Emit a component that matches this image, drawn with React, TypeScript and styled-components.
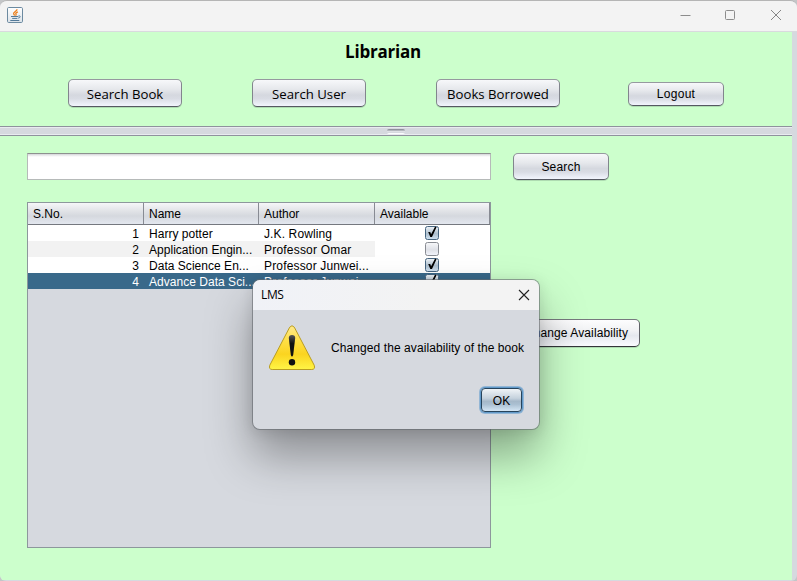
import React from "react";
import styled, { createGlobalStyle, css } from "styled-components";

const GlobalStyle = createGlobalStyle`
  * { box-sizing: border-box; }
  body { margin: 0; background: #c4c6c8; overflow: hidden; }
`;

const Window = styled.div`
  position: relative;
  width: 797px;
  height: 581px;
  display: flex;
  flex-direction: column;
  overflow: hidden;
  background: #d6d9df;
  border-top: 1px solid #b5b5b5;
  border-radius: 7px 7px 6px 6px;
  font-family: "Liberation Sans", Arial, sans-serif;
  font-size: 12px;
  color: #000;
`;

const TitleBar = styled.header`
  height: 31px;
  flex: none;
  display: flex;
  align-items: center;
  justify-content: space-between;
  padding: 0 15px 2px 7px;
  background: #f3f3f3;
  border-bottom: 1px solid #d9dade;
`;

const WindowControls = styled.div`
  display: flex;
  gap: 34px;
`;

const Content = styled.main`
  width: 792px;
  height: 548px;
  display: flex;
  flex-direction: column;
  background: #ccffcc;
`;

const TopPanel = styled.section`
  height: 94px;
  flex: none;
`;

const Heading = styled.h1`
  margin: 0;
  padding: 8px 0 0 345px;
  height: 47px;
  font: 700 17px/24px "Open Sans", "Noto Sans", sans-serif;
  letter-spacing: -0.2px;
  white-space: nowrap;
`;

const Nav = styled.nav`
  display: flex;
  height: 28px;
  align-items: flex-start;
  padding-left: 68px;
`;

const Button = styled.button<{ $w: number; $h?: number; $ml?: number; $mt?: number; $large?: boolean; $hover?: boolean; $track?: number }>`
  flex: none;
  width: ${(p) => p.$w}px;
  height: ${(p) => p.$h ?? 28}px;
  margin: ${(p) => p.$mt ?? 0}px 0 0 ${(p) => p.$ml ?? 0}px;
  padding: ${(p) => (p.$large ? "2px 0 0" : "0")};
  border: 1px solid;
  border-color: #96999f #82858d #555861 #82858d;
  border-radius: 5px;
  background: linear-gradient(#f7f8fa 0%, #e6e8ec 35%, #d5d8df 58%, #d9dce4 72%, #f2f5fd 100%);
  box-shadow: 0 1px 0 rgba(110, 140, 120, 0.3);
  color: #000;
  font: 12px/16px "Liberation Sans", Arial, sans-serif;
  letter-spacing: ${(p) => p.$track ?? 0}px;
  white-space: nowrap;
  ${(p) => p.$large && css`font: 13.2px/18px "Open Sans", "Noto Sans", sans-serif;`}
  ${(p) =>
    p.$hover &&
    css`
      border-color: #77797e #606268 #33353a;
      background: linear-gradient(#fdfdfe 0%, #f2f3f5 40%, #e5e8ee 60%, #fafbff 100%);
    `}
`;

const Divider = styled.div`
  height: 10px;
  flex: none;
  display: flex;
  justify-content: center;
  align-items: flex-start;
  padding-top: 1px;
  border-top: 1px solid #8f929d;
  border-bottom: 1px solid #8f929d;
  background: linear-gradient(#e9ebf0 0 1px, #d6d9df 1px 7px, #e9ebf0 7px);
`;

const Grip = styled.span`
  width: 18px;
  height: 5px;
  margin-top: 1px;
  border-radius: 2px;
  background: linear-gradient(#8f929b 0 1px, #b4b7be 1px 2px, #dfe1e6 2px 3px, #d6d9df 3px 4px, #fcfcfe 4px);
`;

const BottomPanel = styled.section`
  flex: 1;
  display: grid;
  grid-template-columns: 464px 127px;
  grid-template-rows: 27px 346px;
  column-gap: 22px;
  row-gap: 22px;
  padding: 17px 0 0 27px;
`;

const SearchField = styled.input`
  width: 464px;
  height: 27px;
  border: 1px solid #b6bab9;
  border-top-color: #8d918f;
  outline: none;
  background: linear-gradient(#d4d5d8 0, #f4f4f5 2px, #fff 3px);
`;

const Table = styled.div`
  width: 464px;
  height: 346px;
  border: 1px solid #8d979c;
  background: #d6d9df;
`;

const Columns = styled.div`
  display: grid;
  grid-template-columns: 116px 115px 116px 115px;
`;

const HeaderRow = styled(Columns)`
  height: 22px;
  border-bottom: 1px solid #75787f;
  background: linear-gradient(#f5f6f8, #e1e3e7 38%, #d5d8de 62%, #e3e7ef 100%);
`;

const HeaderCell = styled.div`
  padding: 3px 0 0 5px;
  line-height: 16px;
  border-right: 1px solid #888b93;
`;

const Row = styled(Columns)<{ $striped?: boolean; $selected?: boolean }>`
  height: 16px;
  line-height: 16px;
  color: ${(p) => (p.$selected ? "#fff" : "#000")};
  background: ${(p) =>
    p.$selected ? "#39698a" : p.$striped ? "linear-gradient(90deg, #f2f2f2 347px, #fff 347px)" : "#fff"};
`;

const Cell = styled.div<{ $align?: string; $track?: number }>`
  height: 16px;
  padding: 1px 5px 0;
  letter-spacing: ${(p) => p.$track ?? 0}px;
  text-align: ${(p) => p.$align ?? "left"};
  white-space: nowrap;
  overflow: hidden;
`;

const CheckCell = styled.div`
  padding-left: 49px;
`;

const ChangeSlot = styled.div`
  padding-top: 117px;
`;

const Dialog = styled.div`
  position: absolute;
  left: 252px;
  top: 278px;
  width: 288px;
  height: 151px;
  display: flex;
  flex-direction: column;
  overflow: hidden;
  border: 1px solid rgba(100, 105, 110, 0.6);
  border-radius: 8px;
  background: #d6d9df;
  background-clip: padding-box;
  box-shadow: 0 26px 46px rgba(0, 0, 0, 0.34), 0 2px 14px rgba(0, 0, 0, 0.1);
`;

const DialogTitle = styled.div`
  height: 30px;
  flex: none;
  display: flex;
  align-items: center;
  justify-content: space-between;
  padding: 0 9px 1px 8px;
  background: linear-gradient(90deg, #f0f2f7, #f3f3f3 60%);
  font: 12px/16px "Open Sans", sans-serif;
  letter-spacing: -0.35px;
`;

const DialogBody = styled.div`
  display: flex;
  align-items: center;
  gap: 15px;
  height: 78px;
  padding: 0 0 2px 15px;
  letter-spacing: 0.085px;
  white-space: nowrap;
`;

const DialogActions = styled.div`
  display: flex;
  justify-content: flex-end;
  padding-right: 17px;
`;

const OkButton = styled.button`
  width: 41px;
  height: 24px;
  padding: 1px 0 0;
  border: 1px solid #26445c;
  border-radius: 4px;
  background: linear-gradient(#f0f4f7 0%, #c5d2dd 42%, #a5b8c9 56%, #abc0d2 70%, #d4e6f5 100%);
  box-shadow: 0 0 0 1px #6199c9, 0 0 0 2px #93b6d5;
  font: 12px/16px "Liberation Sans", Arial, sans-serif;
  color: #000;
`;

const Icon = styled.svg`
  display: block;
  flex: none;
`;

function JavaIcon() {
  return (
    <Icon width="16" height="16" viewBox="0 0 16 16" fill="none">
      <defs>
        <linearGradient id="java-bg" x1="0" y1="0" x2="0" y2="1">
          <stop stopColor="#fff" />
          <stop offset="1" stopColor="#dce3e9" />
        </linearGradient>
      </defs>
      <rect x=".5" y=".5" width="15" height="15" rx="1.2" fill="url(#java-bg)" stroke="#6c8aa0" />
      <path d="M10 2.2C10.2 4.2 6.2 4.8 6.6 6.7c.1.7.8 1.2 1 1.9M10.9 4.8C9 5.7 8.3 6.2 9 7.2c.3.5.1 1-.5 1.4" stroke="#ed8220" strokeWidth="1.3" />
      <path d="M4 9.5h7.2M5.2 11.4h5.2M11.4 9c2.5-.7 2.3 1.8-.2 2.1M3.3 13.5h9" stroke="#527998" strokeWidth="1" />
    </Icon>
  );
}

function WarningIcon() {
  return (
    <Icon width="48" height="48" viewBox="0 0 48 48">
      <defs>
        <linearGradient id="warn-fill" x1="0" y1="0" x2="0" y2="1">
          <stop stopColor="#ffe98c" />
          <stop offset=".35" stopColor="#ffdf45" />
          <stop offset=".65" stopColor="#fbd420" />
          <stop offset="1" stopColor="#fff546" />
        </linearGradient>
        <linearGradient id="warn-mark" x1="0" y1="0" x2="0" y2="1">
          <stop stopColor="#555" />
          <stop offset=".4" stopColor="#111" />
        </linearGradient>
      </defs>
      <path
        d="M21.7 3.2Q24 .2 26.3 3.2L46.2 41.2Q47.5 45.5 43.8 45.5H4.2Q.5 45.5 1.8 41.2Z"
        fill="url(#warn-fill)"
        stroke="#b99d22"
      />
      <path d="M20.8 13.9Q20.8 10.9 24 10.9T27.2 13.9L25.2 31Q24 34 22.8 31Z" fill="url(#warn-mark)" />
      <circle cx="24" cy="38.2" r="3.2" fill="#111" />
    </Icon>
  );
}

function CheckBox({ checked }: { checked?: boolean }) {
  return (
    <Icon width="16" height="16" viewBox="0 0 16 16" fill="none">
      <defs>
        <linearGradient id="box-on" x1="0" y1="0" x2="0" y2="1">
          <stop stopColor="#f0f4f8" />
          <stop offset=".55" stopColor="#adbfce" />
          <stop offset="1" stopColor="#d0e2f1" />
        </linearGradient>
        <linearGradient id="box-off" x1="0" y1="0" x2="0" y2="1">
          <stop stopColor="#f7f8fa" />
          <stop offset=".55" stopColor="#dfe1e7" />
          <stop offset="1" stopColor="#f3f5fc" />
        </linearGradient>
      </defs>
      <rect x="1.5" y="1.5" width="13" height="13" rx="2" fill={checked ? "url(#box-on)" : "url(#box-off)"} stroke={checked ? "#466580" : "#898c93"} />
      {checked && <path d="M4.2 7.1 6.2 6.9 7.1 9.2 11 1.8 12.6 2.1 8 11.9H6.3Z" fill="#000" />}
    </Icon>
  );
}

const books = [
  { name: "Harry potter", author: "J.K. Rowling", available: true, track: 0.12 },
  { name: "Application Engin...", author: "Professor Omar", available: false, track: 0.2 },
  { name: "Data Science En...", author: "Professor Junwei...", available: true, track: 0.16 },
  { name: "Advance Data Sci...", author: "Professor Junwei...", available: true, track: 0.16 },
];

export default function App() {
  return (
    <>
      <GlobalStyle />
      <Window>
        <TitleBar>
          <JavaIcon />
          <WindowControls>
            <Icon width="11" height="12" fill="none" stroke="#8c8c8c">
              <path d="M.5 6.5h10" />
            </Icon>
            <Icon width="11" height="12" fill="none" stroke="#8c8c8c">
              <rect x=".5" y="1.5" width="9" height="9" rx="1" />
            </Icon>
            <Icon width="12" height="12" fill="none" stroke="#858585">
              <path d="m1 1 10 10M11 1 1 11" />
            </Icon>
          </WindowControls>
        </TitleBar>
        <Content>
          <TopPanel>
            <Heading>Librarian</Heading>
            <Nav>
              <Button $w={114} $large>Search Book</Button>
              <Button $w={114} $ml={70} $large>Search User</Button>
              <Button $w={124} $ml={70} $large>Books Borrowed</Button>
              <Button $w={96} $h={24} $ml={68} $mt={3} $track={0.3}>Logout</Button>
            </Nav>
          </TopPanel>
          <Divider>
            <Grip />
          </Divider>
          <BottomPanel>
            <SearchField aria-label="Search books" />
            <Button $w={96} $h={27} $track={0.2}>Search</Button>
            <Table>
              <HeaderRow>
                {["S.No.", "Name", "Author", "Available"].map((h) => (
                  <HeaderCell key={h}>{h}</HeaderCell>
                ))}
              </HeaderRow>
              {books.map((b, i) => (
                <Row key={b.name} $striped={i === 1} $selected={i === 3}>
                  <Cell $align="right">{i + 1}</Cell>
                  <Cell $track={0.03}>{b.name}</Cell>
                  <Cell $track={b.track}>{b.author}</Cell>
                  <CheckCell>
                    <CheckBox checked={b.available} />
                  </CheckCell>
                </Row>
              ))}
            </Table>
            <ChangeSlot>
              <Button $w={127} $hover $track={0.1}>Change Availability</Button>
            </ChangeSlot>
          </BottomPanel>
        </Content>
        <Dialog role="dialog" aria-label="LMS">
          <DialogTitle>
            LMS
            <Icon width="12" height="12" fill="none" stroke="#222" strokeWidth="1.1">
              <path d="m1 1 10 10M11 1 1 11" />
            </Icon>
          </DialogTitle>
          <DialogBody>
            <WarningIcon />
            Changed the availability of the book
          </DialogBody>
          <DialogActions>
            <OkButton>OK</OkButton>
          </DialogActions>
        </Dialog>
      </Window>
    </>
  );
}
